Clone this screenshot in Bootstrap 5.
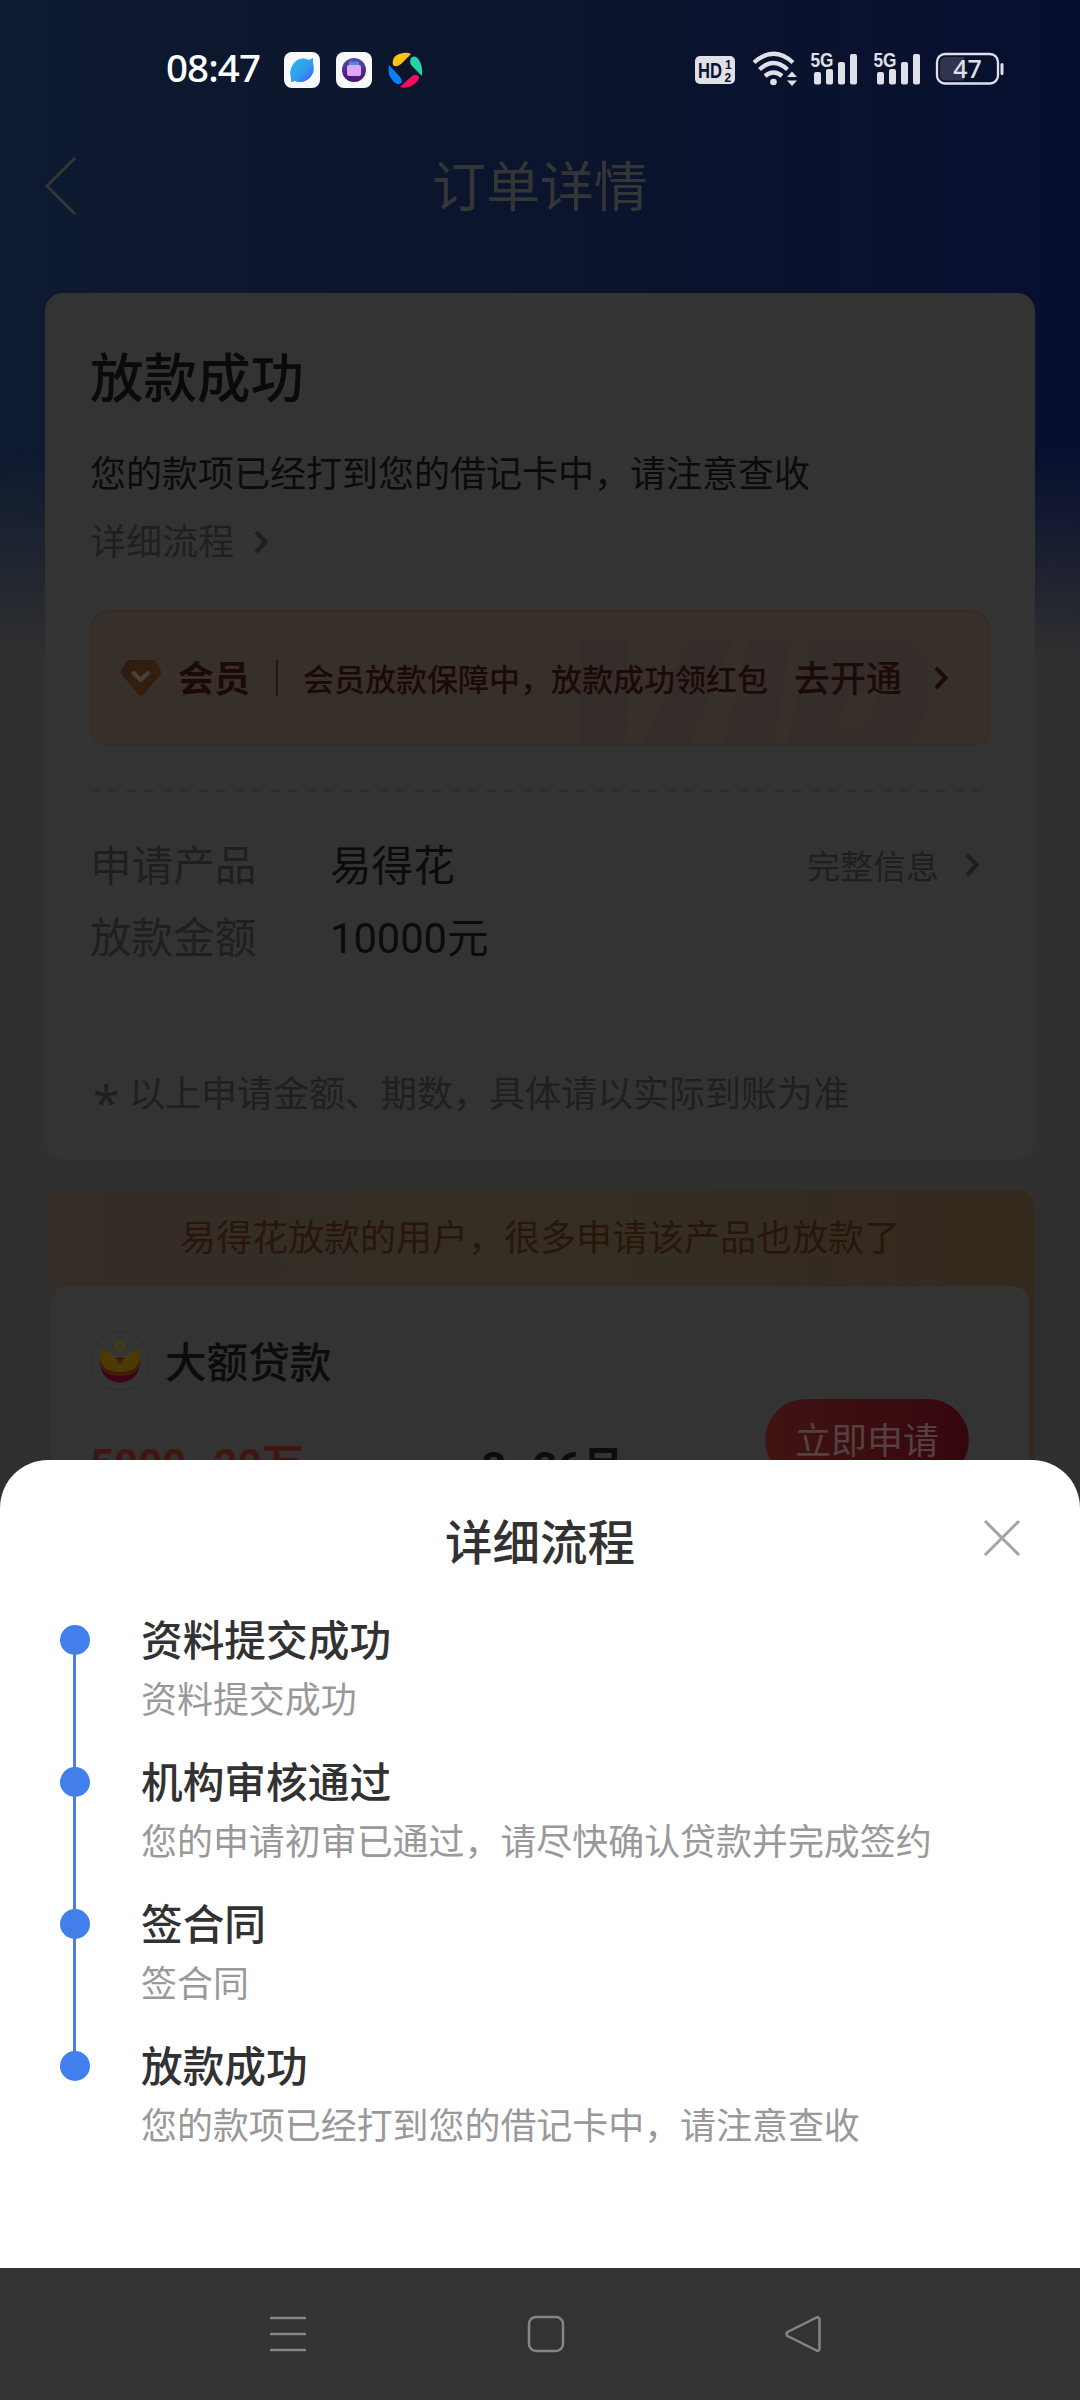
<!DOCTYPE html>
<html lang="zh-CN">
<head>
<meta charset="utf-8">
<meta name="viewport" content="width=device-width, initial-scale=1">
<title>订单详情</title>
<link href="https://cdn.jsdelivr.net/npm/bootstrap@5.3.0/dist/css/bootstrap.min.css" rel="stylesheet">
<style>
body{width:1080px;height:2400px;overflow:hidden;position:relative;background:#303030;font-family:Roboto,"Noto Sans CJK SC",sans-serif;line-height:1}
svg{display:block;flex:none}
.page-bg{height:2400px;background:linear-gradient(180deg,rgba(48,48,48,0) 0,rgba(48,48,48,0) 450px,rgba(48,48,48,.45) 550px,#303030 660px),linear-gradient(90deg,#0e1a30 0,#0b162d 40%,#09122d 75%,#070f30 100%)}
.status{height:134px;padding-left:166px;color:#fff}
.clock{font:500 38.5px/40px "Noto Sans",sans-serif;width:118px;letter-spacing:-.9px}
.topbar{height:159px;padding-bottom:55px}
.topbar svg{margin-left:44px}
.ttl{font-size:54px;color:#343536;flex:1;text-align:center;padding:6px 77px 0 0}
.order{margin:0 45px;height:866px;border-radius:18px;background:#333;padding:0 45px;border:0;color:#0b0b0b}
.fs36{font-size:36px}.fs42{font-size:41.6px}.fs33{font-size:33px}
.order h1{font-size:53.500px;font-weight:500;line-height:54px;margin:60px 0 0;color:#0a0a0a}
.order p{margin:50px 0 0;line-height:36px}
.muted1{color:#1f1f1f}
.flow{margin-top:32px}
.flow svg{margin:-3px 0 0 19px}
.vip{height:136px;border-radius:18px;background:#362f2a;border:2px solid #372d28;margin:49px 0 0;padding-left:28px;width:900px;color:#1c0a08;overflow:hidden;position:relative}
.vip .wm{position:absolute;right:0;top:0}
.vip>*{position:relative}
.vip .bar{width:2px;height:36px;background:#211310;margin:0 25px 0 26px}
.vip b,.vip span.t{padding-top:4px}
.dash{height:3px;margin-top:43px;width:895px;background:repeating-linear-gradient(90deg,#2d2d2e 0 10px,transparent 10px 18px)}
.kv{height:72px}
.kv .k{width:240px;color:#1f1f1f}
.note{margin-top:102px;height:36px;color:#1f1f1f;white-space:nowrap}
.note .star{width:39px;padding-left:3px;font-size:48px;line-height:50px;font-family:"Noto Sans",sans-serif}
.promo{margin:31px 45px 0;height:400px;border-radius:18px;background:linear-gradient(90deg,#342d28 0,#342e23 55%,#35291d 100%);padding:0 6px}
.promo .hd{height:96px;color:#28160b;text-align:center;line-height:98px}
.inner{height:300px;border-radius:16px;background:#333;padding:45px 39px 0}
.apply{width:204px;height:82px;border-radius:41px;background:linear-gradient(90deg,#3f1412,#36060d);color:#554040;font-size:36px;line-height:86px;text-align:center;margin-right:21px;margin-top:8px}
.price{font-size:42px;white-space:nowrap}
.sheet{position:absolute;left:0;top:1460px;width:1080px;height:808px;background:#fff;border-radius:48px 48px 0 0}
.sheet h2{font-size:47.500px;font-weight:500;line-height:48px;color:#323232;margin:0}
.sheet .head{padding-top:60px;height:146px}
.closer{position:absolute;left:983px;top:59px}
.step{height:142px;padding-left:60px}
.rail{width:81px;position:relative}
.rail i{display:block;width:30px;height:30px;border-radius:50%;background:#407fec;margin-top:19px;position:relative}
.step:not(:last-child) .rail::after{content:"";position:absolute;left:13px;top:34px;width:3px;height:142px;background:#4a80dc}
.st{font-size:41.700px;font-weight:500;line-height:42px;color:#323232;margin-top:15px}
.sd{font-size:35.950px;line-height:36px;color:#999;margin-top:20px}
.sysnav{position:absolute;left:0;top:2268px;width:1080px;height:132px;background:#333;padding-left:268px;gap:218px}
</style>
<script src="https://cdn.jsdelivr.net/npm/bootstrap@5.3.0/dist/js/bootstrap.bundle.min.js"></script>
</head>
<body>
<div class="page-bg">
  <div class="status d-flex align-items-center">
    <span class="clock">08:47</span>
    <svg width="140" height="36" viewBox="0 0 140 36" style="margin-top:6px">
      <defs><linearGradient id="g1" x1="0" y1="0" x2="1" y2="1"><stop offset="0" stop-color="#28b9e8"/><stop offset=".6" stop-color="#3297f0"/><stop offset="1" stop-color="#3c50ff"/></linearGradient>
      <linearGradient id="g2" x1="0" y1="0" x2="0" y2="1"><stop offset="0" stop-color="#4a4fa8"/><stop offset="1" stop-color="#4b1170"/></linearGradient></defs>
      <rect width="36" height="36" rx="8" fill="#f8f9fd"/>
      <path d="M7 30V26Q5 20 8 14Q12 6 20 6.500Q23 7 25 8L29 6V11Q31 18 28 23Q23 31 14 30L11 29Z" fill="url(#g1)"/>
      <rect x="52" width="36" height="36" rx="8" fill="#f8f9fd"/>
      <circle cx="70" cy="18" r="12" fill="url(#g2)"/><rect x="65" y="9.500" width="10" height="5" rx="1" fill="#5a84df"/><rect x="63" y="13" width="14" height="11" rx="2" fill="#e0a5f5"/>
      <path d="M109 13Q107 3 119 1Q124 0 127 2L117 12Q112 16 109 13Z" fill="#fdc40f"/>
      <path d="M128 5Q132 3 135 8Q139 14 138 24L128 14Q124 9 128 5Z" fill="#27d3a5"/>
      <path d="M105 13Q103 22 109 29Q113 34 117 31Q119 29 116 25Z" fill="#0b80fc"/>
      <path d="M116 35L128 24Q133 21 135 25Q135 29 129 33Q123 37 116 35Z" fill="#fb0d5c"/>
    </svg>
    <svg width="312" height="40" viewBox="694 49 312 40" style="margin-left:270px;margin-top:4px" fill="#dfe0e8">
      <rect x="695" y="56" width="40" height="28" rx="5"/>
      <g fill="#0a122d" font-family="Liberation Sans" font-weight="700"><text x="698" y="78" font-size="22" textLength="24" lengthAdjust="spacingAndGlyphs">HD</text><text x="725" y="68.500" font-size="12">1</text><text x="724.500" y="82" font-size="12">2</text></g>
      <g fill="none" stroke="#dfe0e8" stroke-width="4.300"><path d="M754 62.500Q773.500 45 793 62.500M759.500 69.500Q773.500 56.500 787.500 69.500M765 76Q773.500 69 782 76"/></g>
      <circle cx="773.500" cy="82" r="3.300"/><path d="M787 77L792 71.500L797 77ZM787 80.500H797L792 86Z"/>
      <g id="sig"><text x="810.500" y="66.500" font-family="Liberation Sans" font-weight="700" font-size="19.500" textLength="23" lengthAdjust="spacingAndGlyphs">5G</text><rect x="814" y="72" width="7" height="12.500" rx="2"/><rect x="826" y="69" width="7" height="15.500" rx="2"/><rect x="838" y="62" width="7" height="22.500" rx="2"/><rect x="850" y="54" width="7" height="30.500" rx="2"/></g>
      <use href="#sig" x="63"/>
      <rect x="937" y="54" width="61" height="29.500" rx="8" fill="none" stroke="#dfe0e8" stroke-width="2.300"/>
      <path d="M946 57H964V80.500H946Q940 80.500 940 75V63Q940 57 946 57Z" fill="#31334f"/>
      <rect x="1000.500" y="63" width="3" height="12" rx="1.500"/><text x="967.500" y="77.500" font-family="Noto Sans" font-weight="500" font-size="25" text-anchor="middle">47</text>
    </svg>
  </div>
  <div class="topbar d-flex align-items-center">
    <svg width="33" height="60" viewBox="0 0 33 60" fill="none" stroke="#343535" stroke-width="3"><path d="M31 2L3 30L31 58"/></svg>
    <div class="ttl">订单详情</div>
  </div>
  <div class="order card">
    <h1>放款成功</h1>
    <p class="fs36">您的款项已经打到您的借记卡中，请注意查收</p>
    <div class="flow d-flex align-items-center muted1 fs36"><span>详细流程</span>
      <svg width="16" height="24" viewBox="0 0 16 24" fill="none" stroke="#1f1f1f" stroke-width="4"><path d="M3 2L12.500 12L3 22"/></svg></div>
    <div class="vip d-flex align-items-center">
      <svg class="wm" width="430" height="132" viewBox="559 611 430 132" fill="#342d29"><path d="M580 637H628L627 743H580ZM690 637H735L690 743H645ZM750 637H792L775 743H725ZM812 637H900Q935 650 930 690Q925 735 905 743H788ZM850 690L838 725H870L880 690Z" fill-rule="evenodd"/></svg>
      <svg width="42" height="38" viewBox="0 0 42 38"><defs><linearGradient id="g3" x1="0" y1="0" x2="1" y2="1"><stop offset="0" stop-color="#2c1a10"/><stop offset=".6" stop-color="#35200e"/><stop offset="1" stop-color="#2c1708"/></linearGradient></defs><path d="M9 1H33Q35 1 36 3L41 12Q42 14 40 16L24 35Q21 38 18 35L2 16Q0 14 1 12L6 3Q7 1 9 1Z" fill="url(#g3)"/><path d="M13.500 14L20.500 21L28 14" fill="none" stroke="#494139" stroke-width="4" stroke-linecap="round" stroke-linejoin="round"/></svg>
      <b class="fs36" style="margin-left:16px">会员</b>
      <span class="bar"></span>
      <span class="t" style="font-size:31px;font-weight:500">会员放款保障中，放款成功领红包</span>
      <span class="t fs36" style="font-weight:500;margin-left:26px">去开通</span>
      <svg style="margin-left:31px" width="16" height="24" viewBox="0 0 16 24" fill="none" stroke="#1c0a08" stroke-width="4"><path d="M3 2L12.500 12L3 22"/></svg>
    </div>
    <div class="dash"></div>
    <div class="kv d-flex align-items-center fs42" style="margin-top:39px"><span class="k">申请产品</span><span>易得花</span>
      <span class="fs33 muted1 ms-auto">完整信息</span><svg style="margin:-4px 10px 0 25px" width="16" height="24" viewBox="0 0 16 24" fill="none" stroke="#1f1f1f" stroke-width="4"><path d="M3 2L12.500 12L3 22"/></svg></div>
    <div class="kv d-flex align-items-center fs42"><span class="k">放款金额</span><span>10000元</span></div>
    <div class="note d-flex fs36"><span class="star">*</span>以上申请金额、期数，具体请以实际到账为准</div>
  </div>
  <div class="promo">
    <div class="hd fs36">易得花放款的用户，很多申请该产品也放款了</div>
    <div class="inner">
      <div class="d-flex align-items-center">
        <svg width="60" height="60" viewBox="0 0 60 60"><circle cx="30" cy="30" r="29" fill="#343434" stroke="#2c2e2d"/><path d="M10 27V32Q12 51 30 51.500Q48 51 50 32V27Z" fill="#3d0513"/><path d="M10 28V33Q13 45 30 45Q47 45 50 33V28Z" fill="#421d07"/><path d="M10 18Q24 21 30 34Q36 21 50 18V27Q48 41 30 41Q12 41 10 27Z" fill="#4b3a04"/><circle cx="30" cy="15" r="4" fill="none" stroke="#453b0b" stroke-width="3"/></svg>
        <span class="fs42" style="font-weight:500;color:#0c0c0c;margin-left:15px;padding-top:6px">大额贷款</span>
      </div>
      <div class="d-flex">
        <b class="price" style="color:#401512;width:392px;margin-top:53px">5000~20万</b>
        <b class="price" style="color:#0c0c0c;margin-top:56px">3~36月</b>
        <span class="apply ms-auto">立即申请</span>
      </div>
    </div>
  </div>
</div>
<div class="sheet">
  <div class="head text-center"><h2>详细流程</h2></div>
  <svg class="closer" width="38" height="38" viewBox="0 0 38 38" stroke="#a3a3a3" stroke-width="3"><path d="M2 2L36 36M36 2L2 36"/></svg>
  <div class="step d-flex"><div class="rail"><i></i></div><div><div class="st">资料提交成功</div><div class="sd">资料提交成功</div></div></div>
  <div class="step d-flex"><div class="rail"><i></i></div><div><div class="st">机构审核通过</div><div class="sd">您的申请初审已通过，请尽快确认贷款并完成签约</div></div></div>
  <div class="step d-flex"><div class="rail"><i></i></div><div><div class="st">签合同</div><div class="sd">签合同</div></div></div>
  <div class="step d-flex"><div class="rail"><i></i></div><div><div class="st">放款成功</div><div class="sd">您的款项已经打到您的借记卡中，请注意查收</div></div></div>
</div>
<nav class="sysnav d-flex align-items-center">
  <svg width="40" height="40" viewBox="0 0 40 40" stroke="#858585" stroke-width="2.500"><path d="M2 4H38M2 20H38M2 36H38"/></svg>
  <svg width="40" height="40" viewBox="0 0 40 40" stroke="#858585" stroke-width="2.500" fill="none"><rect x="3" y="3" width="34" height="34" rx="7"/></svg>
  <svg width="40" height="40" viewBox="0 0 40 40" stroke="#858585" stroke-width="2.500" fill="none" stroke-linejoin="round"><path d="M3.500 18Q1.500 20 3.500 22L32.500 36.500Q35.500 37.500 35.500 34V6Q35.500 2.500 32.500 3.500Z"/></svg>
</nav>
</body>
</html>
